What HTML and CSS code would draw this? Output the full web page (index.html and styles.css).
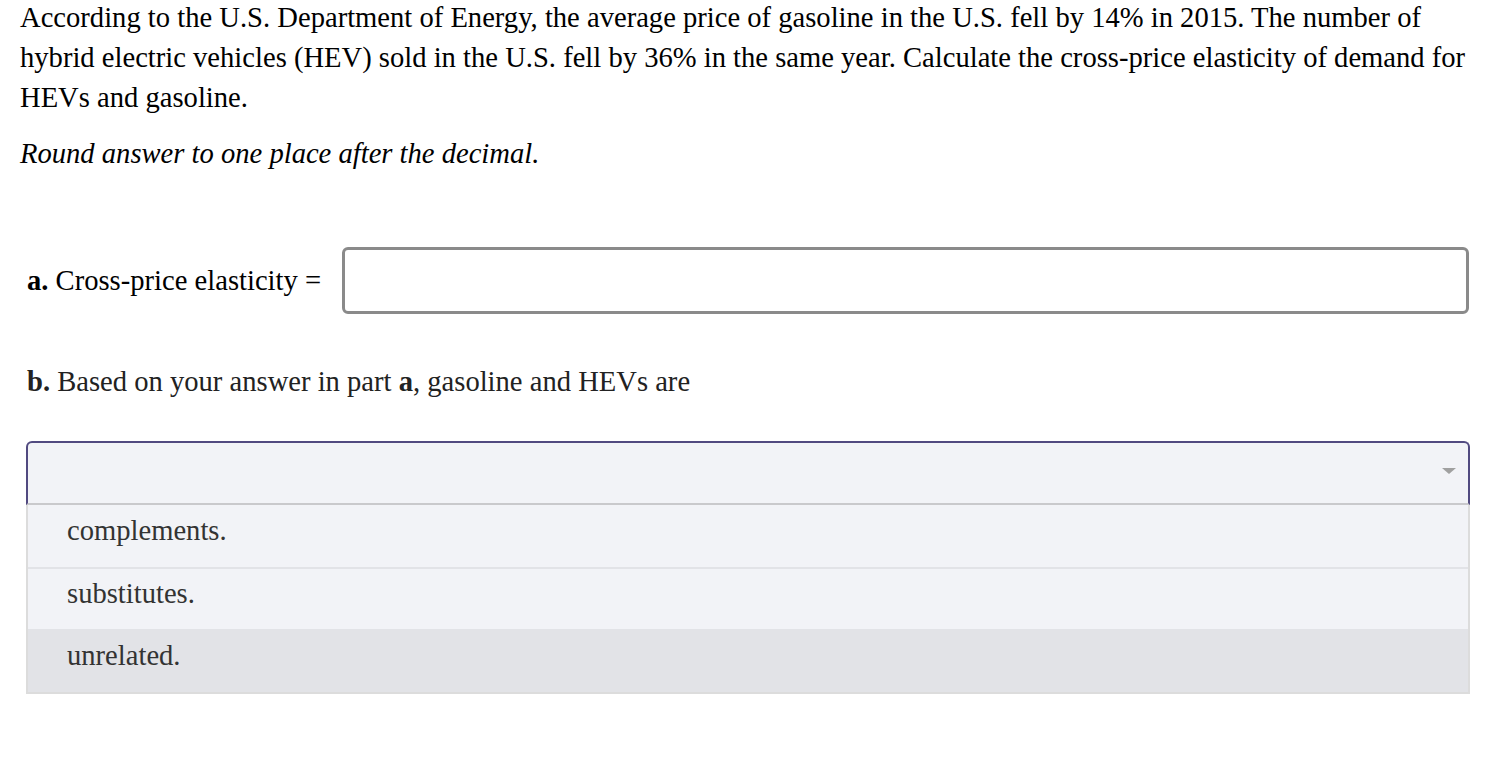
FILE: index.html
```html
<!DOCTYPE html>
<html lang="en">
<head>
    <meta charset="UTF-8">
    <title>Cross-price elasticity</title>
    <link rel="stylesheet" href="styles.css">
</head>
<body>

    <!-- Question text -->
    <div class="question">
        <p>According to the U.S. Department of Energy, the average price of gasoline in the U.S. fell by 14% in 2015. The number of hybrid electric vehicles (HEV) sold in the U.S. fell by 36% in the same year. Calculate the cross-price elasticity of demand for HEVs and gasoline.</p>
        <p class="hint">Round answer to one place after the decimal.</p>
    </div>

    <!-- Part a -->
    <div class="part-a">
        <label for="elasticity"><b>a.</b> Cross-price elasticity =</label>
        <input type="text" id="elasticity" class="answer-input">
    </div>

    <!-- Part b -->
    <div class="part-b">
        <p><b>b.</b> Based on your answer in part <b>a</b>, gasoline and HEVs are</p>
    </div>

    <div class="dropdown">
        <div class="dropdown-select">
            <span class="arrow"></span>
        </div>
        <ul class="dropdown-menu">
            <li>complements.</li>
            <li>substitutes.</li>
            <li class="hovered">unrelated.</li>
        </ul>
    </div>

</body>
</html>
```

FILE: styles.css
```css
/* Basic Reset */
* {
    margin: 0;
    padding: 0;
    box-sizing: border-box;
}

body {
    font-family: 'Liberation Serif', 'Times New Roman', serif;
    font-size: 28.6px;
    color: #000;
    background-color: #fff;
    padding: 0 20px;
}

/* Question */
.question {
    margin-top: -2px;
}

.question p {
    line-height: 40px;
}

.question .hint {
    font-style: italic;
    margin-top: 16px;
}

/* Part a */
.part-a {
    display: flex;
    align-items: center;
    gap: 21px;
    margin-top: 73px;
    padding-left: 7px;
}

.answer-input {
    flex: 1;
    height: 67px;
    border: 3px solid #8a8a8a;
    border-radius: 6px;
    background-color: #fff;
    font-size: 24px;
    margin-right: 13px;
}

/* Part b */
.part-b {
    margin-top: 48px;
    padding-left: 7px;
    line-height: 40px;
    color: #222;
}

/* Dropdown */
.dropdown {
    margin-top: 39px;
    margin-left: 6px;
    margin-right: 12px;
}

.dropdown-select {
    position: relative;
    height: 64px;
    background-color: #f2f3f7;
    border: 2px solid #514a80;
    border-bottom: 2px solid #c9c9cc;
    border-radius: 6px 6px 0 0;
}

.dropdown-select .arrow {
    position: absolute;
    right: 12px;
    top: 25px;
    width: 0;
    height: 0;
    border-left: 7px solid transparent;
    border-right: 7px solid transparent;
    border-top: 6px solid #a0a0a0;
}

.dropdown-menu {
    list-style: none;
    border: 2px solid #dcdcdc;
    border-top: none;
    color: #333;
}

.dropdown-menu li {
    display: flex;
    align-items: center;
    height: 62px;
    padding-left: 39px;
    padding-bottom: 11px;
    background-color: #f2f3f7;
    border-top: 2px solid #e2e3e7;
}

.dropdown-menu li:first-child {
    border-top: none;
}

.dropdown-menu li.hovered {
    background-color: #e2e3e7;
    height: 63px;
}
```
